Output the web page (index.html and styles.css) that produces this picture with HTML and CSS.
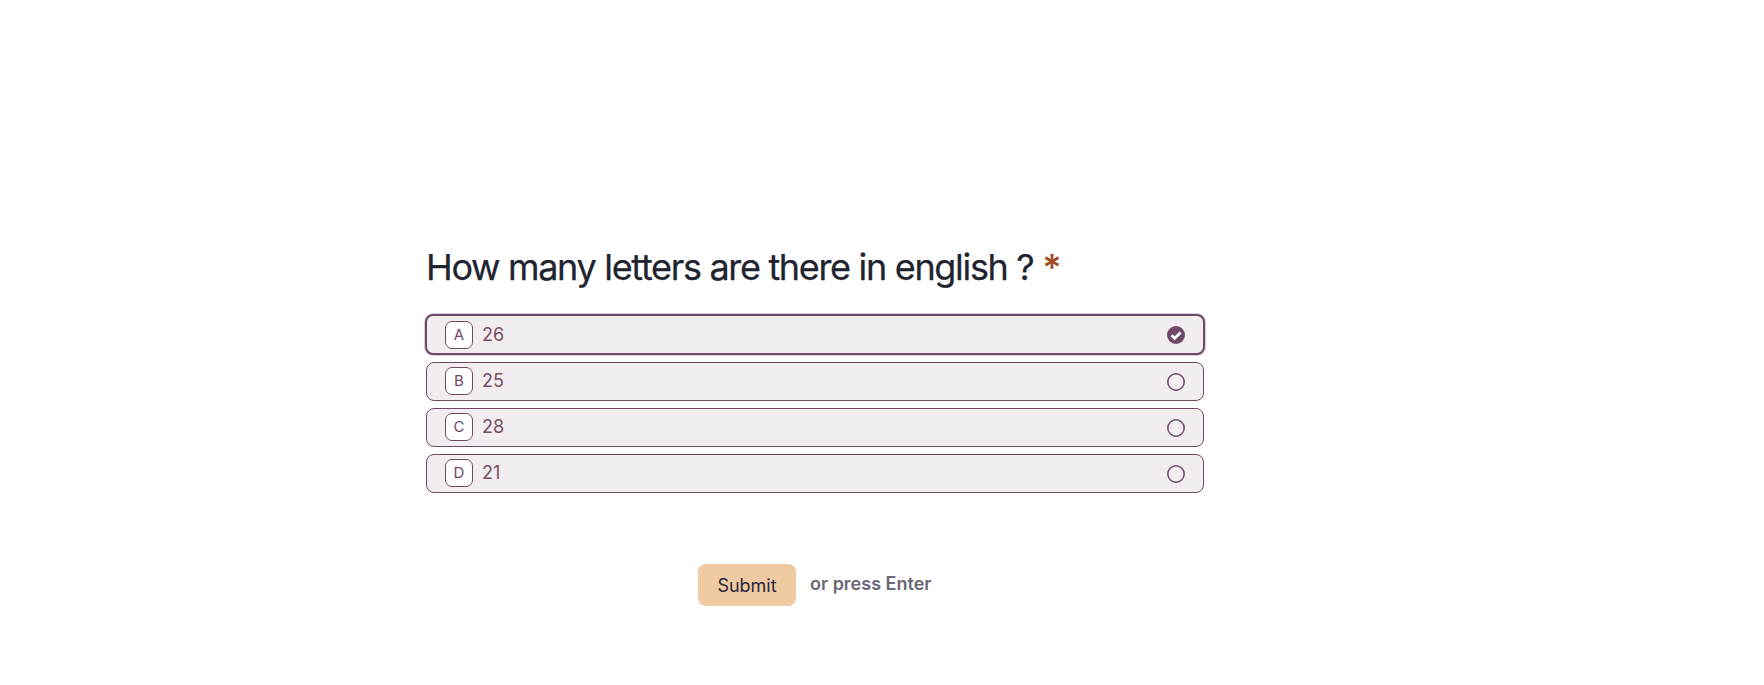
FILE: index.html
```html
<!DOCTYPE html>
<html lang="en">
<head>
<meta charset="utf-8">
<title>Question</title>
<link rel="stylesheet" href="styles.css">
</head>
<body>
<main class="form">
  <h1 class="question">How many letters are there in english ? <span class="required">*</span></h1>
  <div class="options">
    <div class="option selected">
      <span class="key">A</span><span class="label">26</span>
      <svg class="mark" viewBox="0 0 18 18"><circle cx="9" cy="9" r="9" fill="#6f4a68"/><path d="M4.6 9.2l3.1 3L13.6 6.4" fill="none" stroke="#fff" stroke-width="2.8"/></svg>
    </div>
    <div class="option">
      <span class="key">B</span><span class="label">25</span>
      <svg class="mark" viewBox="0 0 18 18"><circle cx="9" cy="9" r="8.2" fill="none" stroke="#6f4a68" stroke-width="1.5"/></svg>
    </div>
    <div class="option">
      <span class="key">C</span><span class="label">28</span>
      <svg class="mark" viewBox="0 0 18 18"><circle cx="9" cy="9" r="8.2" fill="none" stroke="#6f4a68" stroke-width="1.5"/></svg>
    </div>
    <div class="option">
      <span class="key">D</span><span class="label">21</span>
      <svg class="mark" viewBox="0 0 18 18"><circle cx="9" cy="9" r="8.2" fill="none" stroke="#6f4a68" stroke-width="1.5"/></svg>
    </div>
  </div>
  <div class="actions">
    <button class="submit" type="button">Submit</button>
    <span class="hint">or press Enter</span>
  </div>
</main>
</body>
</html>
```
FILE: styles.css
```css
* { box-sizing: border-box; }
html, body { margin: 0; background: #fff; }
body { height: 685px; overflow: hidden; font-family: Inter, "Noto Sans", sans-serif; }
.form { width: 780px; margin-left: 425px; padding-top: 243px; }
.question { margin: 0 0 23px 1px; font-size: 36px; line-height: 48px; font-weight: 400; letter-spacing: -1.32px; color: #1f2430; -webkit-text-stroke: 0.25px #1f2430; }
.required { color: #a84a2a; font-weight: 600; -webkit-text-stroke: 0; }
.options { display: flex; flex-direction: column; gap: 7px; }
.option { display: flex; align-items: center; height: 39px; margin: 0 1px; padding: 0 18px; background: #f1edf1; border: 1px solid #6f4a68; border-radius: 8px; color: #6f4a68; }
.option.selected { height: 41px; margin: 0; border-width: 2px; box-shadow: 0 0 0 1px rgba(111,74,104,.25); }
.key { display: flex; align-items: center; justify-content: center; width: 28px; height: 28px; margin-bottom: 2px; background: #fff; border: 1px solid #6f4a68; border-radius: 7px; font-size: 15px; }
.label { margin: 0 0 2px 9px; font-size: 18px; flex: 1; color: #7a4f5f; }
.selected .key, .selected .label { margin-bottom: 0; }
.mark { width: 18px; height: 18px; }
.actions { display: flex; align-items: center; margin: 71px 0 0 273px; gap: 14px; }
.submit { width: 98px; height: 42px; background: #f0cba2; border: 0; border-radius: 8px; font: 400 18px Inter, sans-serif; color: #2a2440; padding: 0; }
.hint { font-size: 18px; font-weight: 600; color: #6b6877; margin-bottom: 4px; }
```
